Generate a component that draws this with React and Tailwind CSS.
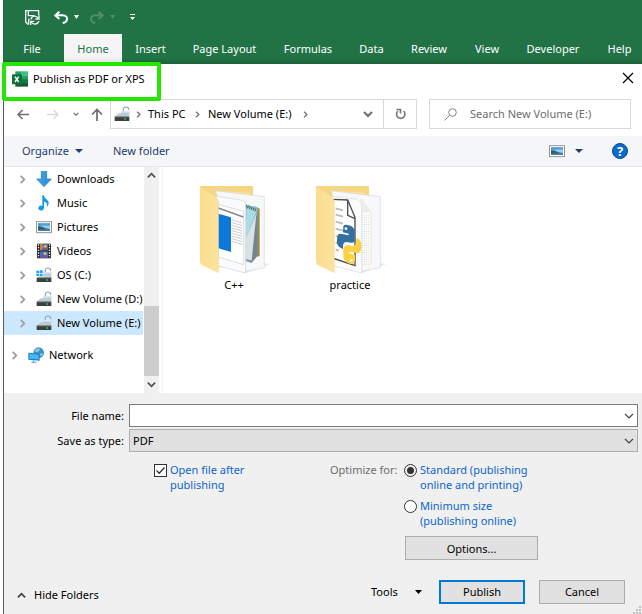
import { useState } from 'react';

const TABS = [
  { label: 'File', width: 'w-[58px] mr-[3px]' },
  { label: 'Home', width: 'w-[58px]', active: true },
  { label: 'Insert', width: 'w-[57px]' },
  { label: 'Page Layout', width: 'w-[91px]' },
  { label: 'Formulas', width: 'w-[76px]' },
  { label: 'Data', width: 'w-[51px]' },
  { label: 'Review', width: 'w-[64px]' },
  { label: 'View', width: 'w-[52px]' },
  { label: 'Developer', width: 'w-[80px]' },
  { label: 'Help', width: 'w-[53px]' },
];

function Chevron({ dir = 'down', size = 10, width = 1.5, className = '' }) {
  const d = {
    down: 'M1 3 L5 7 L9 3',
    up: 'M1 7 L5 3 L9 7',
    right: 'M3 1 L7 5 L3 9',
  }[dir];
  return (
    <svg width={size} height={size} viewBox="0 0 10 10" className={`shrink-0 ${className}`} aria-hidden="true">
      <path d={d} fill="none" stroke="currentColor" strokeWidth={width} />
    </svg>
  );
}

function Caret({ width = 8, className = '' }) {
  return (
    <svg width={width} height="4" viewBox="0 0 8 4" preserveAspectRatio="none" className={`shrink-0 ${className}`} aria-hidden="true">
      <path d="M0 0H8L4 4Z" fill="currentColor" />
    </svg>
  );
}

function SaveSyncIcon() {
  return (
    <svg width="15" height="15" viewBox="0 0 45 45" fill="none" stroke="#f0f5f2" strokeWidth="4" aria-hidden="true">
      <path d="M12 42H8L2 36V2H41V15" />
      <path d="M10 3V17H28" />
      <path d="M11 42V28H14" />
      <path d="M18 28C20 17 34 15 40 25" strokeWidth="4" />
      <path d="M42 16V27H31" strokeWidth="4" />
      <path d="M42 33C39 43 25 46 19 36" strokeWidth="4" />
      <path d="M17 45V34H28" strokeWidth="4" />
    </svg>
  );
}

function UndoIcon({ flip }) {
  return (
    <svg width="14" height="13" viewBox="0 0 42 39" className={flip ? '-scale-x-100' : ''} fill="none" stroke="currentColor" strokeWidth="6" aria-hidden="true">
      <path d="M16 2L4 13L16 24" />
      <path d="M4 13H26C36 13 40 19 39 25C38 31 33 35 26 36" />
    </svg>
  );
}

function ExcelIcon() {
  return (
    <svg width="16" height="16" viewBox="0 0 48 48" className="shrink-0" aria-hidden="true">
      <path d="M10 1H29V13H10Z" fill="#21a366" />
      <path d="M29 1H46Q48 1 48 3V13H29Z" fill="#33c481" />
      <path d="M10 13H29V25H10Z" fill="#107c41" />
      <path d="M29 13H48V25H29Z" fill="#21a366" />
      <path d="M10 25H48V47H10Z" fill="#185c37" />
      <path d="M29 25H48V36H29Z" fill="#107c41" />
      <rect y="10" width="30" height="30" rx="2" fill="#0f7339" />
      <path d="M9 17L20 33M20 17L9 33" stroke="#fff" strokeWidth="4.5" />
    </svg>
  );
}

function DriveIcon({ os }) {
  return (
    <svg width="16" height="16" viewBox="0 0 48 48" className="shrink-0" aria-hidden="true">
      {os && <path d="M1 11H9V18H1ZM11 10H20V18H11ZM1 20H9V27H1ZM11 20H20V28H11Z" fill="#16a9e8" />}
      <path d="M28 18V10Q28 3 36 3Q44 3 44 10V12" fill="none" stroke="#8ea9bb" strokeWidth="3.5" />
      <path d={os ? 'M8 29H43L47 35H3Z' : 'M13 22H40L46 33H2Z'} fill="#c9c9c9" />
      <path d="M22 15H46V29H22Z" fill="#b4ccdb" />
      <path d="M22 15H46V20H22Z" fill="#d9e6ee" />
      <path d="M2 32H46V45H2Z" fill="#3b3f40" />
      <path d="M2 32H46V34H2Z" fill="#777" />
      <rect x="31" y="37" width="5" height="4" fill="#2ee83a" />
    </svg>
  );
}

function PictureIcon() {
  return (
    <svg width="16" height="14" viewBox="0 0 48 42" className="shrink-0" aria-hidden="true">
      <rect x="1.5" y="5" width="45" height="33" fill="#fff" stroke="#959595" strokeWidth="3" />
      <path d="M6 10H42V33H6Z" fill="#9ecbee" />
      <path d="M6 10H42V17Q22 15 6 19Z" fill="#4f9bdc" />
      <path d="M6 19Q18 18 28 25L42 27V33H6Z" fill="#2f625d" />
      <path d="M6 29L42 27V33H6Z" fill="#3f83b9" />
    </svg>
  );
}

function DownloadIcon() {
  return (
    <svg width="16" height="16" viewBox="0 0 48 48" className="shrink-0" aria-hidden="true">
      <path d="M16 1H32V24H46L24 47L2 24H16Z" fill="#3293df" stroke="#1c78c2" strokeWidth="2" />
      <path d="M18 3H23V27H8L24 43" fill="none" stroke="#5eb4f0" strokeWidth="2" />
    </svg>
  );
}

function MusicIcon() {
  return (
    <svg width="16" height="16" viewBox="0 0 48 48" className="shrink-0" aria-hidden="true">
      <path d="M19 1H24C25 12 39 15 38 25C38 31 33 35 31 36C36 28 31 21 24 20V38C24 50 6 48 7 39C8 32 15 30 19 33Z" fill="#169be9" />
    </svg>
  );
}

function VideoIcon() {
  return (
    <svg width="16" height="16" viewBox="0 0 48 48" className="shrink-0" aria-hidden="true">
      <path d="M3 2H45V46H3Z" fill="#292929" />
      <path d="M12 3H36V22H12Z" fill="#376ed0" />
      <path d="M12 25H36V45H12Z" fill="#376ed0" />
      <path d="M12 3H19L22 12L17 22H12Z" fill="#d47a3b" />
      <circle cx="28" cy="10" r="5" fill="#e9b72f" />
      <path d="M23 17L34 13L35 20L26 22Z" fill="#a94b45" />
      <circle cx="27" cy="32" r="5" fill="#e9b72f" />
      <path d="M13 40L22 34L34 41V45H13Z" fill="#774d9d" />
      <path d="M7.500 4V46M40.500 4V46" stroke="#f5f5f5" strokeWidth="4" strokeDasharray="4 4" />
    </svg>
  );
}

function NetworkIcon() {
  return (
    <svg width="16" height="16" viewBox="0 0 48 48" className="shrink-0" aria-hidden="true">
      <circle cx="32" cy="17" r="16" fill="#3e91bd" />
      <path d="M22 9Q27 3 33 4L36 9L28 16L20 14ZM39 17L45 20Q44 26 39 28L35 23Z" fill="#8cc3dd" />
      <path d="M1 17L35 20V41L1 38Z" fill="#1583cf" />
      <path d="M4 20L32 23V37L4 35Z" fill="#45b7fa" />
      <path d="M16 40V45M10 46H25" stroke="#4f9cc7" strokeWidth="3" />
    </svg>
  );
}

function FolderBack() {
  return (
    <>
      <path d="M5 6H162V240H20Z" fill="#f7d681" />
      <path d="M58 20L150 26V250H58Z" fill="#f8e3a6" />
    </>
  );
}

function FolderFront({ id }) {
  return (
    <>
      <defs>
        <linearGradient id={id} x1="0" y1="0" x2="1" y2="0">
          <stop offset="0" stopColor="#fbdd8c" />
          <stop offset="1" stopColor="#fbe3a0" />
        </linearGradient>
      </defs>
      <path d="M3 6L48 37Q58 43 58 55V267L10 244Q3 240 3 232Z" fill={`url(#${id})`} />
      <path d="M3 6L48 37Q58 43 58 55V267" fill="none" stroke="#f3d27d" strokeWidth="1.5" />
    </>
  );
}

function CppFolder() {
  return (
    <svg width="72" height="92" viewBox="0 0 216 276" aria-hidden="true">
      <path d="M140 268L214 240L195 238L138 252Z" fill="#e8e8e8" />
      <FolderBack />
      <path d="M48 20L196 38V251L140 262Z" fill="#f7f8f9" stroke="#d5d7d9" strokeWidth="2" />
      {/* notebook */}
      <path d="M165 66L182 74V216L160 222Z" fill="#a98747" />
      <path d="M140 62L176 70L177 214L156 237L138 232Z" fill="#82c1cf" />
      <path d="M143 71L174 76L139 168Z" fill="#a9dce5" />
      <path d="M176 80L177 214L158 236L140 226Z" fill="#75868b" />
      <path d="M172 90L158 230L139 224V168Z" fill="#d9e1e3" />
      <path d="M140 66L174 80" stroke="#555" strokeWidth="9" strokeDasharray="3 3" />
      {/* page */}
      <path d="M50 36L124 48Q140 51 140 62V267L50 244Z" fill="#fafbfc" stroke="#cfd3d6" strokeWidth="2" />
      <path d="M58 61L134 82V242L58 219Z" fill="#fff" stroke="#c8cdd1" strokeWidth="2" />
      <path d="M58 72L133 99" stroke="#838a91" strokeWidth="5" />
      <path d="M58 89L96 100V204L58 193Z" fill="#0b79d9" />
      <path d="M99 108L130 117M99 116L130 125M99 124L130 133M99 132L130 141M99 140L130 149M99 148L130 157M99 156L130 165M99 164L130 173M99 172L130 181" stroke="#adb1b5" strokeWidth="2" />
      <FolderFront id="cpp-front" />
    </svg>
  );
}

function PythonFolder() {
  return (
    <svg width="72" height="92" viewBox="0 0 216 276" aria-hidden="true">
      <path d="M140 268L214 240L195 238L138 252Z" fill="#e8e8e8" />
      <FolderBack />
      <path d="M48 20L196 38V251L140 262Z" fill="#f7f8f9" stroke="#d5d7d9" strokeWidth="2" />
      <path d="M138 46L168 85V240H138Z" fill="#fff" stroke="#edd7a1" strokeWidth="2" />
      <path d="M139 86H168L140 48Z" fill="#ededed" />
      <path d="M143 92V236M149 92V236M155 92V236M161 92V236" stroke="#d0d3d6" strokeWidth="3" strokeDasharray="3 4" />
      <path d="M48 36L126 46Q140 54 140 66V267L48 244Z" fill="#fcfcfc" stroke="#d8dadc" strokeWidth="2" />
      <path d="M52 46L98 48L120 100V245L52 222" fill="#fff" stroke="#4b4c4e" strokeWidth="4" />
      <path d="M98 50V94L120 104" fill="none" stroke="#4b4c4e" strokeWidth="4" />
      <path d="M62 73L84 79M62 92L84 98M62 113L84 119M62 134L84 140M62 155L77 160M62 176L72 179M62 197L72 200" stroke="#b8babd" strokeWidth="5" />
      {/* python logo */}
      <path d="M85 127Q87 120 101 124Q118 128 119 142V169Q119 177 109 176L94 174Q85 174 84 186V195L74 190Q64 183 66 166Q66 148 77 149L101 154V149L84 145Z" fill="#34709f" />
      <circle cx="93" cy="134" r="4" fill="#fff" />
      <path d="M123 162L132 166Q140 173 139 191Q137 207 128 208L103 203V208L120 213V228Q120 243 104 239Q86 233 85 220V196Q87 183 99 184L112 186Q123 186 123 174Z" fill="#fbd244" />
      <circle cx="109" cy="229" r="4" fill="#fff" />
      <FolderFront id="py-front" />
    </svg>
  );
}

const TREE = [
  { label: 'Downloads', icon: <DownloadIcon /> },
  { label: 'Music', icon: <MusicIcon /> },
  { label: 'Pictures', icon: <PictureIcon /> },
  { label: 'Videos', icon: <VideoIcon /> },
  { label: 'OS (C:)', icon: <DriveIcon os /> },
  { label: 'New Volume (D:)', icon: <DriveIcon /> },
  { label: 'New Volume (E:)', icon: <DriveIcon />, selected: true },
];

function Ribbon() {
  return (
    <header className="ml-[3px] bg-[#217346] text-white">
      <div className="flex h-[34px] items-center pl-[22px]">
        <button type="button" aria-label="Save" className="mr-[14px]"><SaveSyncIcon /></button>
        <button type="button" aria-label="Undo" className="mr-[6px]"><UndoIcon /></button>
        <Caret width={5} className="mr-[11px]" />
        <button type="button" aria-label="Redo" disabled className="mr-[6px] text-[#4f9069]"><UndoIcon flip /></button>
        <Caret width={5} className="mr-[15px] text-[#4f9069]" />
        <button type="button" aria-label="Customize toolbar">
          <svg width="5" height="7" viewBox="0 0 5 7"><path d="M0 0H5V1H0ZM0 3H5L2.500 6Z" fill="currentColor" /></svg>
        </button>
      </div>
      <nav className="flex h-[30px] overflow-hidden bg-linear-to-b from-[#217346] from-80% to-[#1d6039]">
        {TABS.map((tab) => (
          <button
            key={tab.label}
            type="button"
            className={`shrink-0 whitespace-nowrap text-center ${tab.width} ${
              tab.active ? 'bg-linear-to-b from-[#f5f5f5] from-75% to-[#dedede] text-[#217346]' : ''
            }`}
          >
            {tab.label}
          </button>
        ))}
      </nav>
    </header>
  );
}

function AddressRow() {
  return (
    <div className="flex h-[30px] items-center pr-[11px] text-[#6d6d6d]">
      <div className="flex w-[106px] shrink-0 items-center pl-[13px]">
        <button type="button" aria-label="Back" className="mr-[18px]">
          <svg width="12" height="11" viewBox="0 0 12 11" fill="none" stroke="#6d6d6d" strokeWidth="1.5"><path d="M12 5.500H1M5.500 1L1 5.500L5.500 10" /></svg>
        </button>
        <button type="button" aria-label="Forward" disabled className="mr-[14px]">
          <svg width="12" height="11" viewBox="0 0 12 11" fill="none" stroke="#dadada" strokeWidth="1.500"><path d="M0 5.500H11M6.500 1L11 5.500L6.500 10" /></svg>
        </button>
        <button type="button" aria-label="Recent locations" className="mr-[12px]"><Chevron size={6} width={2} /></button>
        <button type="button" aria-label="Up">
          <svg width="12" height="13" viewBox="0 0 12 13" fill="none" stroke="#6d6d6d" strokeWidth="1.700"><path d="M6 13V1.500M1 6.500L6 1.500L11 6.500" /></svg>
        </button>
      </div>
      <div className="flex h-full min-w-0 grow border border-[#d9d9d9]">
        <div className="flex grow items-center overflow-hidden whitespace-nowrap pl-[3px] text-black">
          <DriveIcon />
          <Chevron dir="right" size={7} width={2} className="ml-[5px] mr-[6px] text-[#777]" />
          <a href="#this-pc" className="w-[46px]">This PC</a>
          <Chevron dir="right" size={7} width={2} className="mr-[7px] text-[#777]" />
          <a href="#volume-e" className="w-[94px]">New Volume (E:)</a>
          <Chevron dir="right" size={7} width={2} className="text-[#777]" />
        </div>
        <button type="button" aria-label="Previous locations" className="pr-[10px]"><Chevron width={2} /></button>
        <button type="button" aria-label="Refresh" className="flex w-[33px] items-center justify-center border-l border-[#d9d9d9]">
          <svg width="11" height="12" viewBox="0 0 11 12" fill="none" stroke="#777" strokeWidth="1.600">
            <path d="M8.500 3A4.200 4.200 0 1 1 3 3" />
            <path d="M1.500 1.500H5.500V5.500" />
          </svg>
        </button>
      </div>
      <label className="ml-[12px] flex h-full w-[202px] shrink-0 items-center border border-[#d9d9d9] pl-[14px]">
        <svg width="13" height="13" viewBox="0 0 13 13" fill="none" stroke="#858585" className="shrink-0" aria-hidden="true">
          <circle cx="8.500" cy="4.500" r="3.800" />
          <path d="M5.700 7.300L0.500 12.500" />
        </svg>
        <input
          type="text"
          aria-label="Search New Volume (E:)"
          placeholder="Search New Volume (E:)"
          className="ml-[13px] w-full min-w-0 outline-none placeholder:text-[#6d6d6d]"
        />
      </label>
    </div>
  );
}

function Toolbar() {
  return (
    <div className="mt-[7px] flex h-[31px] items-center border-b border-[#e5e5e5] bg-[#f5f6f8] pl-[18px] pr-[14px] text-[#1e3c6e]">
      <button type="button" className="flex w-[91px] items-center gap-[6px]">Organize <Caret width={8} /></button>
      <button type="button">New folder</button>
      <button type="button" aria-label="Change view" className="ml-auto flex items-center gap-[10px]">
        <PictureIcon />
        <Caret width={8} />
      </button>
      <button type="button" aria-label="Help" className="ml-[29px] flex size-4 items-center justify-center rounded-full border border-[#064f91] bg-[#0a6bce] text-[13px] font-bold leading-none text-white">
        ?
      </button>
    </div>
  );
}

function Sidebar() {
  return (
    <aside className="flex w-[155px] shrink-0">
      <ul className="min-w-0 grow">
        {TREE.map((node) => (
          <li key={node.label} className={`flex h-6 items-center overflow-hidden whitespace-nowrap pl-[14px] ${node.selected ? 'bg-[#cce8ff]' : ''}`}>
            <Chevron dir="right" size={9} width={2} className="mr-[9px] text-[#a0a0a0]" />
            {node.icon}
            <span className="ml-[5px]">{node.label}</span>
          </li>
        ))}
        <li className="mt-2 flex h-6 items-center whitespace-nowrap pl-[6px]">
          <Chevron dir="right" size={9} width={2} className="mr-[9px] text-[#a0a0a0]" />
          <NetworkIcon />
          <span className="ml-[5px]">Network</span>
        </li>
      </ul>
      <div className="ml-px flex w-[15px] shrink-0 flex-col items-center bg-[#f0f0f0] text-[#505050]">
        <button type="button" aria-label="Scroll up" className="flex h-[17px] items-center"><Chevron dir="up" size={9} width={2} /></button>
        <div className="mt-auto h-[70px] w-full bg-[#cdcdcd]" />
        <button type="button" aria-label="Scroll down" className="flex h-[17px] items-center"><Chevron size={9} width={2} /></button>
      </div>
    </aside>
  );
}

function SaveForm() {
  const [openAfter, setOpenAfter] = useState(true);
  const [optimize, setOptimize] = useState('standard');

  const options = [
    { id: 'standard', lines: ['Standard (publishing', 'online and printing)'] },
    { id: 'minimum', lines: ['Minimum size', '(publishing online)'] },
  ];

  return (
    <form className="bg-[#f0f0f0] pt-[11px]" onSubmit={(e) => e.preventDefault()}>
      <div className="grid grid-cols-[120px_1fr] items-center gap-x-[5px] gap-y-[2px] pr-1">
        <label htmlFor="file-name" className="text-right">File name:</label>
        <div className="flex h-[23px] items-center border border-[#7a7a7a] bg-white pr-[3px]">
          <input id="file-name" type="text" className="min-w-0 grow px-[3px] outline-none" />
          <button type="button" aria-label="Recent names"><Chevron width={1.2} className="text-[#444]" /></button>
        </div>
        <label htmlFor="save-type" className="text-right">Save as type:</label>
        <div className="relative h-[23px]">
          <select id="save-type" className="h-full w-full appearance-none border border-[#adadad] bg-[#e1e1e1] px-[3px]">
            <option>PDF</option>
          </select>
          <Chevron width={1.2} className="pointer-events-none absolute right-[4px] top-[7px] text-[#444]" />
        </div>
      </div>

      <div className="mt-[10px] flex pl-[150px] leading-[15px]">
        <label className="flex w-[176px] items-start gap-[3px] text-[#0a66cc]">
          <span className="mt-[2px] grid size-[13px] shrink-0 place-items-center">
            <input
              type="checkbox"
              checked={openAfter}
              onChange={(e) => setOpenAfter(e.target.checked)}
              className="col-start-1 row-start-1 size-[13px] appearance-none border border-[#333] bg-white"
            />
            {openAfter && (
              <svg width="11" height="11" viewBox="0 0 11 11" className="pointer-events-none col-start-1 row-start-1">
                <path d="M1.500 5.500L4.200 8.200L9.500 2.500" fill="none" stroke="#333" strokeWidth="1.300" />
              </svg>
            )}
          </span>
          <span>Open file after<br />publishing</span>
        </label>
        <fieldset className="flex">
          <legend className="float-left w-[74px] text-[#6d6d6d]">Optimize for:</legend>
          <div>
            <div className="flex flex-col gap-[6px]">
              {options.map((opt) => (
                <label key={opt.id} className="flex items-start gap-[3px] text-[#0a66cc]">
                  <input
                    type="radio"
                    name="optimize"
                    checked={optimize === opt.id}
                    onChange={() => setOptimize(opt.id)}
                    className="mt-[2px] size-[13px] shrink-0 appearance-none rounded-full border border-[#333] bg-white checked:bg-[#333] checked:bg-clip-content checked:p-[2px]"
                  />
                  <span className="whitespace-nowrap">{opt.lines[0]}<br />{opt.lines[1]}</span>
                </label>
              ))}
            </div>
            <button type="button" className="ml-px mt-2 h-6 w-[133px] border border-[#adadad] bg-[#e1e1e1]">Options...</button>
          </div>
        </fieldset>
      </div>

      <div className="relative mt-5 flex items-center pb-[10px] pl-[13px] pr-[17px]">
        <button type="button" className="flex items-center gap-[8px] self-end leading-[18px]">
          <Chevron dir="up" size={9} width={2} className="text-[#444]" />
          Hide Folders
        </button>
        <button type="button" className="ml-auto flex w-[51px] items-center justify-between">Tools <Caret width={7} /></button>
        <button type="submit" className="ml-[17px] h-6 w-[86px] border-2 border-[#0078d7] bg-[#e1e1e1]">Publish</button>
        <button type="button" className="ml-[14px] h-6 w-[86px] border border-[#adadad] bg-[#e1e1e1]">Cancel</button>
        <svg width="9" height="9" viewBox="0 0 9 9" className="absolute bottom-0 right-[1px]" aria-hidden="true">
          <path d="M7 1H9V3H7ZM4 4H6V6H4ZM7 4H9V6H7ZM1 7H3V9H1ZM4 7H6V9H4ZM7 7H9V9H7Z" fill="#bfbfbf" />
        </svg>
      </div>
    </form>
  );
}

export default function App() {
  return (
    <div className="bg-white font-['Noto_Sans',sans-serif] text-[11px] leading-[16px] text-black">
      <Ribbon />
      <main className="relative ml-[3px] border-l border-[#5a5a5a]">
        <div className="flex h-[35px] items-start pl-[8px] pr-[8px]">
          <div className="flex h-[30px] items-center gap-[5px]">
            <ExcelIcon />
            <h1>Publish as PDF or XPS</h1>
          </div>
          <button type="button" aria-label="Close" className="ml-auto flex h-[28px] items-center">
            <svg width="12" height="12" viewBox="0 0 12 12"><path d="M1 1L11 11M11 1L1 11" stroke="#000" strokeWidth="1.200" /></svg>
          </button>
        </div>
        <div className="pointer-events-none absolute -left-[2px] -top-[2px] h-[39px] w-[159px] rounded-[2px] border-4 border-[#25e600]" />
        <AddressRow />
        <Toolbar />
        <div className="flex">
          <Sidebar />
          <div className="ml-[3px] flex min-h-[226px] grow items-start border-l border-[#f3f3f3] pl-[14px] pt-[17px]">
            <figure className="flex w-[116px] flex-col items-center">
              <CppFolder />
              <figcaption className="-ml-[2px] leading-[18px]">C++</figcaption>
            </figure>
            <figure className="flex w-[116px] flex-col items-center">
              <PythonFolder />
              <figcaption className="-ml-[2px] leading-[18px]">practice</figcaption>
            </figure>
          </div>
        </div>
        <SaveForm />
      </main>
    </div>
  );
}
